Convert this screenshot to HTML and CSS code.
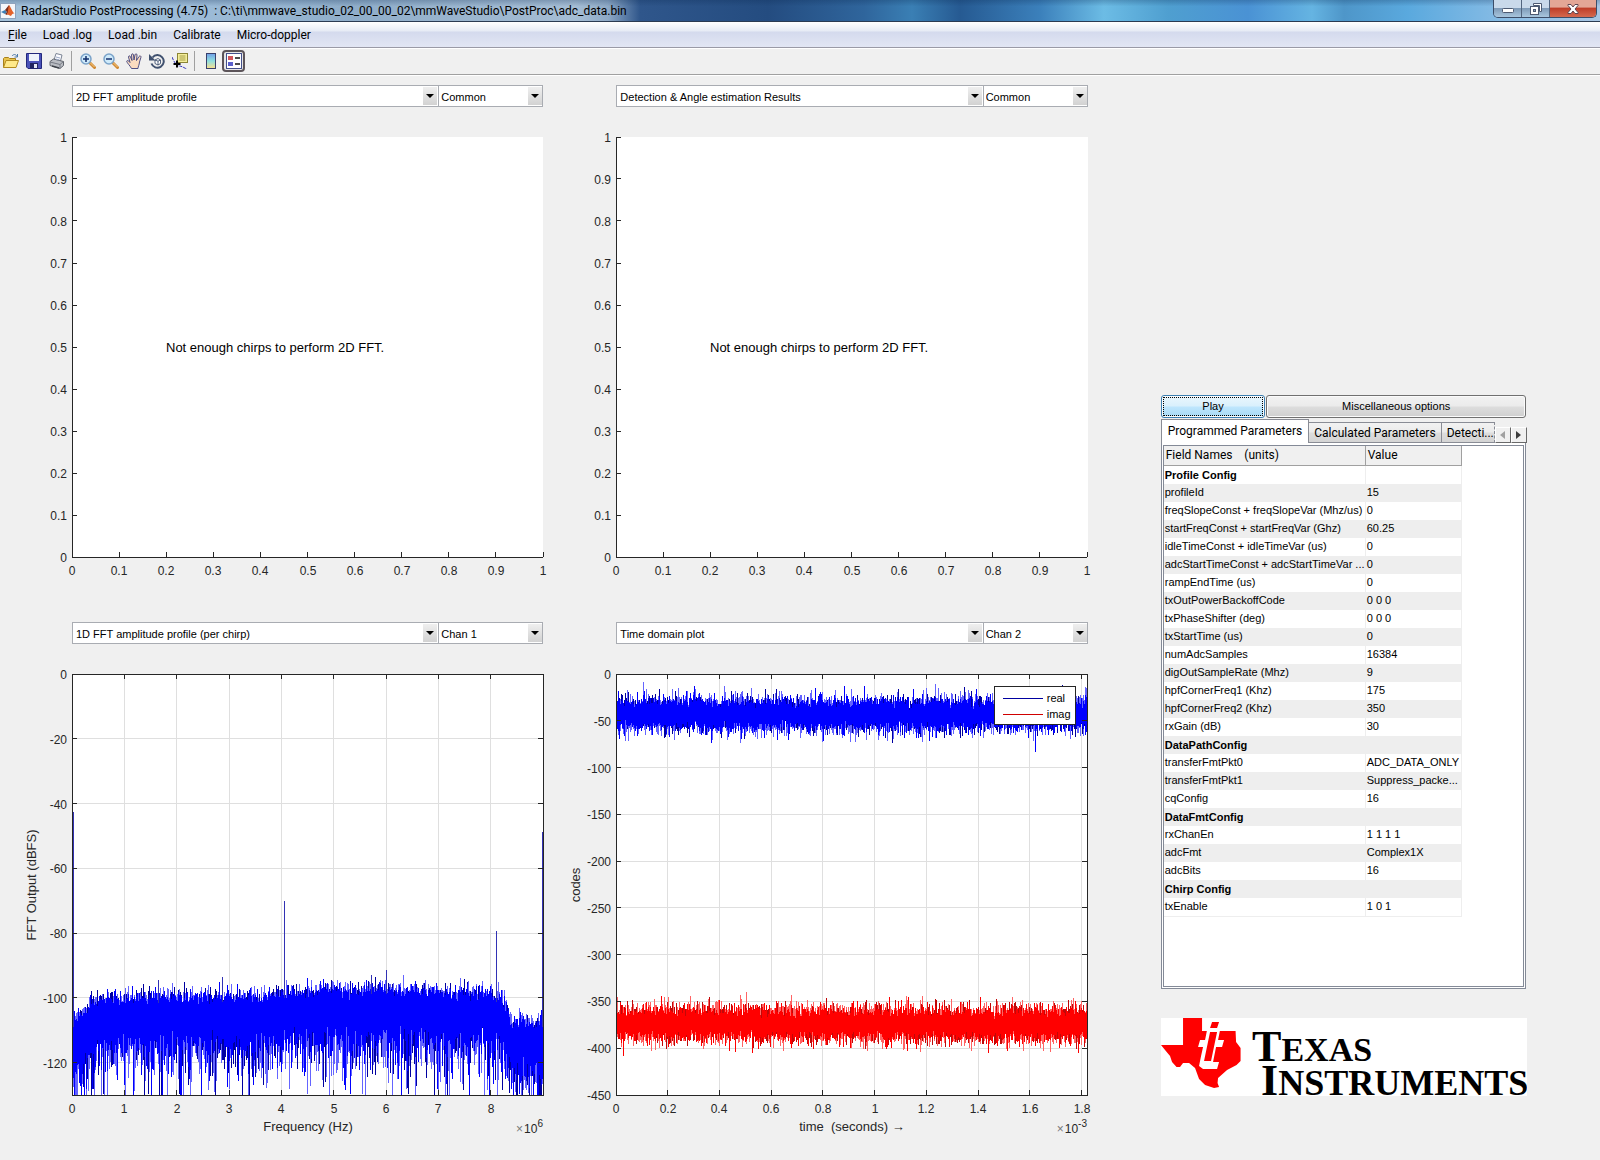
FILE: index.html
```html
<!DOCTYPE html>
<html lang="en">
<head>
<meta charset="utf-8">
<title>RadarStudio PostProcessing</title>
<link rel="stylesheet" href="styles.css">
</head>
<body>
<header class="titlebar">
  <svg class="app-icon" viewBox="0 0 16 16" aria-hidden="true">
    <rect x="0.5" y="0.5" width="15" height="15" fill="#f4f6fa" stroke="#8fa3bd"/>
    <path d="M1 9l4-2 2 2-2 2z" fill="#3f7fb5"/>
    <path d="M5 7l4-5 1 3-3 7-2-1 2-2z" fill="#7a2c1c"/>
    <path d="M9 2c2 2 3 7 6 9-2-1-3 0-4 2-1 0-2-2-4-1 1-3 1-6 2-10z" fill="#e4622a"/>
  </svg>
  <h1 class="window-title">RadarStudio PostProcessing (4.75)&nbsp; : C:\ti\mmwave_studio_02_00_00_02\mmWaveStudio\PostProc\adc_data.bin</h1>
  <div class="window-controls">
    <button class="win-btn" type="button" aria-label="Minimize"><svg width="14" height="12" viewBox="0 0 14 12"><rect x="1.500" y="5.500" width="11" height="4" rx="1" fill="#fff" stroke="#4d5a72"/></svg></button>
    <button class="win-btn" type="button" aria-label="Restore"><svg width="14" height="14" viewBox="0 0 14 14"><path d="M4.500 1.500h8v8h-2v-6h-6z" fill="#fff" stroke="#4d5a72"/><rect x="1.500" y="4.500" width="8" height="8" fill="#fff" stroke="#4d5a72"/><rect x="4.500" y="7.500" width="2" height="2" fill="#8fa6bf" stroke="#4d5a72"/></svg></button>
    <button class="win-btn win-close" type="button" aria-label="Close"><svg width="14" height="12" viewBox="0 0 14 12"><path d="M2 1.500h3l2 2.500 2-2.500h3v1L9 6l3 3.500v1H9L7 8l-2 2.500H2v-1L5 6 2 2.500z" fill="#fff" stroke="#5d4550"/></svg></button>
  </div>
</header>

<nav class="menubar" aria-label="Main menu">
  <button type="button"><u>F</u>ile</button>
  <button type="button">Load .log</button>
  <button type="button">Load .bin</button>
  <button type="button">Calibrate</button>
  <button type="button">Micro-doppler</button>
</nav>

<div class="toolbar" role="toolbar" aria-label="Figure tools">
  <button type="button" aria-label="Open"><svg viewBox="0 0 16 16"><path d="M.5 14.500v-9l1-1h4l1 1h6v3" fill="#e8c34c" stroke="#a8801a"/><path d="M.5 14.500L3 7.500h12.500L13 14.500z" fill="#ffe98a" stroke="#b38a1e"/><path d="M9 3c1.500-2 4-2 5 .5M14.500 1v3h-3" fill="none" stroke="#4b78a8"/></svg></button>
  <button type="button" aria-label="Save"><svg viewBox="0 0 16 16"><path d="M.5.5h15v15H2L.5 14z" fill="#4a52b8" stroke="#23287c"/><rect x="3" y="1" width="10" height="7" fill="#eef3fb"/><rect x="4" y="10" width="8" height="5.500" fill="#20245e"/><rect x="8" y="11" width="3" height="4" fill="#e4e8f4"/></svg></button>
  <button type="button" aria-label="Print"><svg viewBox="0 0 16 16"><path d="M5 7l2-6.500 6 1.500-1.500 6z" fill="#fbfbff" stroke="#7b8494"/><path d="M1 8.500L4.500 6 14.500 8.500v4L11 15.500 1 12.500z" fill="#b9bcc2" stroke="#62666e"/><path d="M1 9l10 2.500 3.500-3M11 11.500v4" fill="none" stroke="#777b84"/><path d="M3 13l7 2" stroke="#3f434a" stroke-width="1.500"/><path d="M7 4l4 1M6.500 6l4 1" stroke="#9aa8c4"/></svg></button>
  <span class="separator"></span>
  <button type="button" aria-label="Zoom in"><svg viewBox="0 0 16 16"><path d="M9.500 9.500l5 5" stroke="#d08a35" stroke-width="3" stroke-linecap="round"/><path d="M10 9.500l4.500 4.500" stroke="#f5cc86"/><circle cx="6" cy="6" r="5" fill="#cfeafa" stroke="#7ba3c9" stroke-width="1.500"/><path d="M6 3v6M3 6h6" stroke="#14306e" stroke-width="1.500"/></svg></button>
  <button type="button" aria-label="Zoom out"><svg viewBox="0 0 16 16"><path d="M9.500 9.500l5 5" stroke="#d08a35" stroke-width="3" stroke-linecap="round"/><path d="M10 9.500l4.500 4.500" stroke="#f5cc86"/><circle cx="6" cy="6" r="5" fill="#cfeafa" stroke="#7ba3c9" stroke-width="1.500"/><path d="M3 6h6" stroke="#14306e" stroke-width="1.500"/></svg></button>
  <button type="button" aria-label="Pan"><svg viewBox="0 0 16 16"><path d="M5.500 15.500C4 12.500 1 10 .7 8.300 1 7 2.500 7.500 4 9.500L2.500 4c0-1.500 1.600-1.600 2 0L6 7.500 5.500 2c.2-1.600 1.800-1.600 2 0L8 7 9 1.800c.4-1.500 2-1.200 2 .2L10.500 7.500 13 3.500c.9-1.300 2.400-.4 1.900 1L13.500 9c-.2 3-1.500 4.500-1.500 6.500z" fill="#fbdcc0" stroke="#3d3f7a" stroke-width=".9"/></svg></button>
  <button type="button" aria-label="Rotate 3D"><svg viewBox="0 0 16 16"><path d="M3.500 4.500a6.300 6.300 0 1 1-1 6" fill="none" stroke="#40516f" stroke-width="2"/><path d="M0 1v6.500h6.500z" fill="#40516f"/><path d="M6 7l3-1.500L11.500 7v3.500L9 12l-3-1.500zM6 7l3 1.200L11.500 7M9 8.200V12" fill="#fff" stroke="#40516f" stroke-width=".9"/></svg></button>
  <button type="button" aria-label="Data cursor"><svg viewBox="0 0 16 16"><path d="M0 4c2 5 4 8 7 9 3 0 5 2 8 3" fill="none" stroke="#3434b8" stroke-dasharray="3 1"/><rect x="5.500" y=".5" width="10" height="9" fill="#f4ee9a" stroke="#8b8536"/><path d="M7.500 3h6M7.500 5h6M7.500 7h6" stroke="#a59e4c"/><path d="M5 7.500v7M1.500 11h7" stroke="#000" stroke-width="2"/></svg></button>
  <span class="separator"></span>
  <button type="button" aria-label="Insert colorbar"><svg viewBox="0 0 16 16"><defs><linearGradient id="cb" x2="0" y2="1"><stop offset="0" stop-color="#6f9ee6"/><stop offset=".5" stop-color="#8fdfe0"/><stop offset="1" stop-color="#fbe08c"/></linearGradient></defs><rect x="3.500" y=".5" width="9" height="15" fill="url(#cb)" stroke="#39406c"/></svg></button>
  <button class="pressed" type="button" aria-label="Insert legend" aria-pressed="true"><svg viewBox="0 0 16 16"><rect x=".5" y=".5" width="15" height="15" fill="#fff" stroke="#44508c"/><rect x="2" y="3" width="5" height="4" fill="#d2555c"/><rect x="2" y="9" width="5" height="4" fill="#5b60cc"/><path d="M9 5h5M9 11h5" stroke="#111" stroke-width="1.500"/></svg></button>
</div>

<main class="workspace">
  <section class="figure" aria-label="Upper left plot">
    <div class="selectors">
      <span class="combo combo-wide"><select aria-label="Upper left plot type"><option>2D FFT amplitude profile</option></select></span>
      <span class="combo"><select aria-label="Upper left channel"><option>Common</option></select></span>
    </div>
    <div class="plot plot-open" data-plot="empty"></div>
  </section>
  <section class="figure" aria-label="Upper right plot">
    <div class="selectors">
      <span class="combo combo-wide"><select aria-label="Upper right plot type"><option>Detection &amp; Angle estimation Results</option></select></span>
      <span class="combo"><select aria-label="Upper right channel"><option>Common</option></select></span>
    </div>
    <div class="plot plot-open" data-plot="empty"></div>
  </section>

  <aside class="side">
    <div class="actions">
      <button class="action play" type="button">Play</button>
      <button class="action misc" type="button">Miscellaneous options</button>
    </div>
    <div class="tabs" role="tablist">
      <button class="tab active" type="button" role="tab" aria-selected="true">Programmed Parameters</button>
      <button class="tab" type="button" role="tab" aria-selected="false">Calculated Parameters</button>
      <button class="tab tab-cut" type="button" role="tab" aria-selected="false">Detecti...</button>
      <span class="tab-scroll">
        <button type="button" aria-label="Previous tabs" disabled><svg width="5" height="8" viewBox="0 0 5 8"><path d="M5 0v8L0 4z" fill="#a0a0a0"/></svg></button>
        <button type="button" aria-label="Next tabs"><svg width="5" height="8" viewBox="0 0 5 8"><path d="M0 0v8l5-4z" fill="#3c3c3c"/></svg></button>
      </span>
    </div>
    <div class="tab-panel" role="tabpanel">
      <div class="table-frame">
        <table class="params">
          <thead><tr><th scope="col">Field Names &nbsp;&nbsp; (units)</th><th scope="col">Value</th></tr></thead>
          <tbody>
            <tr class="group"><td>Profile Config</td><td></td></tr>
            <tr><td>profileId</td><td>15</td></tr>
            <tr><td>freqSlopeConst + freqSlopeVar (Mhz/us)</td><td>0</td></tr>
            <tr><td>startFreqConst + startFreqVar (Ghz)</td><td>60.25</td></tr>
            <tr><td>idleTimeConst + idleTimeVar (us)</td><td>0</td></tr>
            <tr><td>adcStartTimeConst + adcStartTimeVar ...</td><td>0</td></tr>
            <tr><td>rampEndTime (us)</td><td>0</td></tr>
            <tr><td>txOutPowerBackoffCode</td><td>0 0 0</td></tr>
            <tr><td>txPhaseShifter (deg)</td><td>0 0 0</td></tr>
            <tr><td>txStartTime (us)</td><td>0</td></tr>
            <tr><td>numAdcSamples</td><td>16384</td></tr>
            <tr><td>digOutSampleRate (Mhz)</td><td>9</td></tr>
            <tr><td>hpfCornerFreq1 (Khz)</td><td>175</td></tr>
            <tr><td>hpfCornerFreq2 (Khz)</td><td>350</td></tr>
            <tr><td>rxGain (dB)</td><td>30</td></tr>
            <tr class="group"><td>DataPathConfig</td><td></td></tr>
            <tr><td>transferFmtPkt0</td><td>ADC_DATA_ONLY</td></tr>
            <tr><td>transferFmtPkt1</td><td>Suppress_packe...</td></tr>
            <tr><td>cqConfig</td><td>16</td></tr>
            <tr class="group"><td>DataFmtConfig</td><td></td></tr>
            <tr><td>rxChanEn</td><td>1 1 1 1</td></tr>
            <tr><td>adcFmt</td><td>Complex1X</td></tr>
            <tr><td>adcBits</td><td>16</td></tr>
            <tr class="group"><td>Chirp Config</td><td></td></tr>
            <tr><td>txEnable</td><td>1 0 1</td></tr>
          </tbody>
        </table>
      </div>
    </div>
    <svg class="logo" viewBox="0 0 366 78" role="img" aria-label="Texas Instruments">
      <path fill="#f00" d="M22 0H41V13H74.500L75 24 79.500 30V43L75.500 47 66 52 57 60 56.500 65 58 69 53 70 44 67 38 61 34 50 28 45H22L19 49H15.500L11 44 9 38 4 32 0 27H22z"/>
      <path fill="#fff" d="M47 0h14l-2 12-2 10h6l-2 7h-6l-3 15h6l-2 7H42l-4-3 2-10 2-9h-5l2-7h5l2-10h-5V13h5z"/>
      <path fill="#f00" d="M51 4h7l-2 6h-7zM49 14h7l-6 29h-7z"/>
      <text class="logo-text" x="91" y="43"><tspan class="cap">T</tspan><tspan class="small">EXAS</tspan></text>
      <text class="logo-text" x="100" y="77"><tspan class="cap">I</tspan><tspan class="small wide">NSTRUMENTS</tspan></text>
    </svg>
  </aside>

  <section class="figure" aria-label="Lower left plot">
    <div class="selectors">
      <span class="combo combo-wide"><select aria-label="Lower left plot type"><option>1D FFT amplitude profile (per chirp)</option></select></span>
      <span class="combo"><select aria-label="Lower left channel"><option>Chan 1</option></select></span>
    </div>
    <div class="plot" data-plot="fft"></div>
  </section>
  <section class="figure" aria-label="Lower right plot">
    <div class="selectors">
      <span class="combo combo-wide"><select aria-label="Lower right plot type"><option>Time domain plot</option></select></span>
      <span class="combo"><select aria-label="Lower right channel"><option>Chan 2</option></select></span>
    </div>
    <div class="plot" data-plot="time">
      <ul class="legend">
        <li class="real">real</li>
        <li class="imag">imag</li>
      </ul>
    </div>
  </section>
</main>
<script src="plots.js"></script>
</body>
</html>
```

FILE: styles.css
```css
* { box-sizing: border-box; }

body {
  margin: 0;
  min-height: 100vh;
  background: #f0f0f0;
  color: #000;
  font-family: "Liberation Sans", Arial, sans-serif;
  font-size: 11px;
}

button { font: inherit; color: inherit; }

/* Window title bar */
.titlebar {
  display: flex;
  align-items: flex-start;
  height: 22px;
  border-bottom: 1px solid #2b3b52;
  background:
    linear-gradient(180deg, rgba(10, 40, 80, 0.25), rgba(255, 255, 255, 0) 30%),
    linear-gradient(90deg, #a3c1da 0%, #9dbcd8 12%, #8fadc9 22%, #a5bdd4 36%, #8ea9c6 38%, #2f568b 40%, #244c80 48%, #2f659c 54%, #3a7fb4 57%, #265a92 60%, #3b80bb 65%, #6cbce5 69%, #4f9fd0 73%, #4a92d4 78%, #65b4e2 82%, #4e96c9 84%, #5aa9de 88%, #8fbfe6 95%, #a8c6e4 100%);
}

.app-icon { width: 16px; height: 16px; margin: 3px 0 0; }

.window-title {
  flex: 1;
  margin: 0 0 0 5px;
  font: 400 12px/22px Roboto, "Open Sans", sans-serif;
  white-space: nowrap;
}

.window-controls {
  display: flex;
  height: 18px;
  margin-right: 3px;
  border: 1px solid #3c4d68;
  border-top: 0;
  border-radius: 0 0 5px 5px;
  overflow: hidden;
}

.win-btn {
  display: flex;
  align-items: center;
  justify-content: center;
  width: 28px;
  padding: 0;
  border: 0;
  border-right: 1px solid #52657f;
  background: linear-gradient(#c9d9ea 0 45%, #7f9bb8 50%, #a9c6de);
}

.win-close { width: 46px; border-right: 0; background: linear-gradient(#e3a696 0 40%, #bf3f2a 50%, #d5694f); }

/* Menu bar */
.menubar {
  display: flex;
  height: 26px;
  border-bottom: 1px solid #9a9aa6;
  background: linear-gradient(#fff, #e6ebf5 9px, #d4daed 10px, #e2e6f4);
}

.menubar button {
  padding: 0 8px;
  border: 0;
  background: none;
  font: 12px/26px Roboto, "Open Sans", sans-serif;
}

/* Toolbar */
.toolbar {
  display: flex;
  align-items: center;
  height: 27px;
  padding-bottom: 2px;
  border-top: 1px solid #fff;
  border-bottom: 1px solid #a0a0a0;
  box-shadow: 0 1px #fff;
}

.toolbar button {
  display: flex;
  align-items: center;
  justify-content: center;
  width: 23px;
  height: 22px;
  padding: 0;
  border: 0;
  background: none;
}

.toolbar button:first-child { width: 22px; }

.toolbar svg { width: 16px; height: 16px; flex: none; }

.toolbar .pressed { border: 2px solid #5c5459; border-radius: 4px; background: #e6e6e6; }

.separator { width: 8px; height: 20px; border-right: 4px solid transparent; background: linear-gradient(90deg, transparent 3px, #a0a0a0 3px); background-clip: padding-box; }

/* Plots and side panel */
.workspace {
  display: grid;
  grid-template-columns: 471fr 471fr 366fr;
  gap: 65px 73px;
  padding: 10px 73px 65px 72px;
}

.figure { display: flex; flex-direction: column; gap: 30px; min-width: 0; }

.selectors { display: flex; }

.combo { position: relative; flex: 105 1 0; height: 22px; }
.combo-wide { flex-grow: 366; }

.combo select {
  width: 100%;
  height: 100%;
  padding: 2px 18px 0 3px;
  border: 1px solid #a9acb2;
  border-radius: 0;
  background: #fff;
  color: #000;
  font: inherit;
  appearance: none;
}

.combo-wide select { border-right-width: 0; }
.combo:not(.combo-wide) select { padding-left: 2px; }

.combo::after {
  content: "";
  position: absolute;
  inset: 2px 1px 2px auto;
  width: 14px;
  background: linear-gradient(#efefef, #d2d2d2);
  pointer-events: none;
}

.combo::before {
  content: "";
  position: absolute;
  z-index: 1;
  top: 9px;
  right: 4px;
  border: 4px solid transparent;
  border-top-color: #000;
  border-bottom: 0;
  pointer-events: none;
}

.plot { position: relative; aspect-ratio: 471 / 421; background: #fff; }
.plot-open { aspect-ratio: 471 / 420; }
.plot > svg { position: absolute; inset: 0; width: 100%; height: 100%; overflow: visible; }

.plot text { fill: #262626; font-size: 12px; }
.plot .axis-title { font-size: 13px; }
.plot .message { fill: #000; font-size: 13px; }
.plot .exponent { font-size: 10px; }
.plot .times { fill: #777; }
.axis { stroke: #262626; fill: none; shape-rendering: crispEdges; }
.grid { stroke: #262626; stroke-opacity: 0.15; fill: none; shape-rendering: crispEdges; }
.trace { fill: none; shape-rendering: crispEdges; }
.blue { stroke: #00f; }
.blue-dark { stroke: #0000a0; }
.blue-light { stroke: #6464ff; }
.blue-peak { stroke: #3232b4; }
.red { stroke: #f00; }
.red-dark { stroke: #c00808; }
.red-light { stroke: #ff6464; }

.legend {
  position: absolute;
  z-index: 1;
  top: 12px;
  right: 12px;
  width: 82px;
  margin: 0;
  padding: 3px 0 2px 8px;
  border: 1px solid #262626;
  background: #fff;
  list-style: none;
}

.legend li { display: flex; align-items: center; gap: 4px; line-height: 16px; }
.legend li::before { content: ""; width: 40px; height: 1px; background: #0000a0; }
.legend .imag::before { background: #d00000; }

/* Side panel */
.side { grid-column: 3; grid-row: 1 / span 2; align-self: end; min-width: 0; }

.actions { display: flex; gap: 1px; margin-right: 1px; }

.action {
  flex: 261 1 0;
  height: 23px;
  padding: 0;
  border: 1px solid #707070;
  border-radius: 3px;
  background: linear-gradient(#f2f2f2, #ebebeb 48%, #dddddd 52%, #cfcfcf);
  box-shadow: inset 0 0 0 1px #fbfbfb;
}

.action.play {
  flex-grow: 104;
  border-color: #3c7fb1;
  background: linear-gradient(#eaf6fd, #d9f0fc 48%, #bee6fd 52%, #a7d9f5);
  outline: 1px dotted #000;
  outline-offset: -3px;
}

.tabs {
  display: flex;
  align-items: flex-end;
  margin-top: 1px;
  font: 12px/20px Roboto, "Open Sans", sans-serif;
}

.tab {
  height: 21px;
  padding: 0 5px;
  border: 1px solid #898c95;
  border-left-width: 0;
  background: linear-gradient(#f2f2f2, #ebebeb 48%, #dddddd 52%, #d4d4d4);
  white-space: nowrap;
}

.tab.active {
  height: 24px;
  padding: 0 6px;
  border-left-width: 1px;
  border-bottom: 0;
  background: #fff;
}

.tab-cut { flex: 1; border-right: 1px dashed #898c95; text-align: left; overflow: hidden; padding-right: 0; }

.tab-scroll { display: flex; }

.tab-scroll button {
  display: flex;
  align-items: center;
  justify-content: center;
  width: 16px;
  height: 16px;
  padding: 0;
  border: 1px solid #696969;
  border-top-color: #fff;
  border-left-color: #fff;
  background: #f0f0f0;
}

.tab-panel {
  height: 546px;
  padding: 2px 1px 1px;
  border: 1px solid #848a97;
  border-top: 0;
  background: #fff;
  margin-right: 1px;
}

.table-frame { height: 100%; border: 1px solid #848a97; }

.params { width: 298px; border-collapse: separate; border-spacing: 0; table-layout: fixed; }

.params th {
  height: 20px;
  padding: 0 2px;
  border-right: 1px solid #a0a0a0;
  border-bottom: 1px solid #a0a0a0;
  background: #f0f0f0;
  font: 400 12px/18px Roboto, "Open Sans", sans-serif;
  text-align: left;
  white-space: nowrap;
}

.params th:first-child { width: 202px; }

.params td {
  height: 18px;
  padding: 0 0 2px 1px;
  border-right: 1px solid #eee;
  line-height: 16px;
  white-space: nowrap;
}

.params tbody tr:nth-child(even) { background: #eee; }
.params tbody tr:last-child td { border-bottom: 1px solid #eee; }
.params .group td { padding-bottom: 0; line-height: 18px; font-weight: 700; }

.logo { display: block; width: 100%; margin-top: 29px; background: #fff; }
.logo-text { fill: #000; font-family: "Liberation Serif", "Times New Roman", serif; font-weight: 700; }
.logo-text .cap { font-size: 44px; }
.logo-text .small { font-size: 34px; }
.logo-text .wide { font-size: 36px; }
```

FILE: plots.js
```js
// Draws the four axes and their traces as SVG, redrawn when a plot is resized.
const NS = 'http://www.w3.org/2000/svg';
const SAMPLES = 16384;

function random(seed) {
  return () => {
    seed = (seed + 0x6d2b79f5) | 0;
    let t = Math.imul(seed ^ (seed >>> 15), 1 | seed);
    t = (t + Math.imul(t ^ (t >>> 7), 61 | t)) ^ t;
    return ((t ^ (t >>> 14)) >>> 0) / 4294967296;
  };
}

function add(parent, name, attrs, text) {
  const el = document.createElementNS(NS, name);
  for (const key in attrs) el.setAttribute(key, attrs[key]);
  if (text !== undefined) el.textContent = text;
  parent.appendChild(el);
  return el;
}

function interpolate(points, x) {
  for (let i = 1; i < points.length; i++) {
    if (x <= points[i][0]) {
      const [x0, y0] = points[i - 1];
      const [x1, y1] = points[i];
      return y0 + (y1 - y0) * (x - x0) / (x1 - x0);
    }
  }
  return points[points.length - 1][1];
}

// Mean noise level in dBFS against frequency in MHz.
const noiseFloor = [[0, -112], [0.2, -108.5], [0.5, -105.5], [1, -104.6], [3.5, -104], [4.5, -102.5],
  [6, -101.8], [7, -102.5], [8, -103.5], [8.25, -105.5], [8.4, -112], [9, -112]];

function fftSample(rand, x) {
  return interpolate(noiseFloor, x) + 10 * Math.log10(-Math.log(1 - rand()) + 1e-9);
}

function gaussian(mean, sigma) {
  return rand => mean + sigma * Math.sqrt(-2 * Math.log(1 - rand())) * Math.cos(2 * Math.PI * rand());
}

const empty = {
  x: [0, 1], y: [0, 1],
  xTicks: [0, 0.1, 0.2, 0.3, 0.4, 0.5, 0.6, 0.7, 0.8, 0.9, 1],
  yTicks: [0, 0.1, 0.2, 0.3, 0.4, 0.5, 0.6, 0.7, 0.8, 0.9, 1],
  message: 'Not enough chirps to perform 2D FFT.', series: []
};

const plots = {
  empty,
  fft: {
    x: [0, 9], y: [-130, 0], box: true,
    xTicks: [0, 1, 2, 3, 4, 5, 6, 7, 8],
    yTicks: [0, -20, -40, -60, -80, -100, -120],
    xTitle: 'Frequency (Hz)', yTitle: 'FFT Output (dBFS)', power: '6',
    series: [{
      color: 'blue', seed: 11, sample: fftSample,
      peaks: [[0, -42.6], [4.06, -70], [8.11, -79.3], [9, -48.8], [6, -91.5], [5.72, -93], [2.87, -93.7], [1.66, -94.5]]
    }]
  },
  time: {
    x: [0, 1.8204], y: [-450, 0], box: true,
    xTicks: [0, 0.2, 0.4, 0.6, 0.8, 1, 1.2, 1.4, 1.6, 1.8],
    yTicks: [0, -50, -100, -150, -200, -250, -300, -350, -400, -450],
    xTitle: 'time\u00a0 (seconds) \u2192', yTitle: 'codes', power: '-3',
    series: [
      { color: 'blue', seed: 5, sample: gaussian(-43, 9), peaks: [] },
      { color: 'red', seed: 23, sample: gaussian(-374, 9), peaks: [] }
    ]
  }
};

function drawSeries(svg, plot, series, w, sx, sy) {
  const rand = random(series.seed);
  const paths = { '': '', '-dark': '', '-light': '', '-peak': '' };
  const perColumn = Math.round(SAMPLES / w);
  const floor = sy(plot.y[0]);
  const segment = (kind, col, from, to) => {
    const end = Math.min(Math.round(to), floor);
    if (end > from) paths[kind] += `M${col + 0.5} ${Math.round(from)}V${end}`;
  };
  const tipKind = () => ['', '-dark', '-light', '-light'][Math.floor(rand() * 4)];
  for (let col = 0; col < w; col++) {
    const x = plot.x[0] + (plot.x[1] - plot.x[0]) * col / w;
    const values = [];
    for (let i = 0; i < perColumn; i++) values.push(sy(series.sample(rand, x)));
    values.sort((a, b) => a - b);
    const top = values[2];
    const bottom = values[values.length - 3];
    segment('', col, top, bottom);
    segment(tipKind(), col, values[0], top);
    segment(tipKind(), col, bottom, values[values.length - 1]);
  }
  for (const [x, y] of series.peaks) {
    const col = Math.max(1, Math.min(Math.floor(sx(x)), w - 1));
    segment('-peak', col, sy(y), sy(interpolate(noiseFloor, x) + 3));
  }
  for (const kind in paths) add(svg, 'path', { class: `trace ${series.color}${kind}`, d: paths[kind] });
}

function draw(host) {
  const plot = plots[host.dataset.plot];
  const w = Math.round(host.clientWidth);
  const h = Math.round(host.clientHeight);
  const sx = x => (x - plot.x[0]) / (plot.x[1] - plot.x[0]) * w;
  const sy = y => (plot.y[1] - y) / (plot.y[1] - plot.y[0]) * h;
  const old = host.querySelector('svg');
  if (old) old.remove();
  const svg = add(host, 'svg', {});

  let grid = '';
  let ticks = '';
  for (const t of plot.xTicks) {
    const px = Math.floor(sx(t)) + 0.5;
    ticks += `M${px} ${h}v-5`;
    if (plot.box) {
      grid += `M${px} 0V${h}`;
      ticks += `M${px} 0v5`;
    }
    add(svg, 'text', { x: Math.round(sx(t)), y: h + 18, 'text-anchor': 'middle' }, t);
  }
  for (const t of plot.yTicks) {
    const py = Math.floor(sy(t)) + 0.5;
    ticks += `M0 ${py}h5`;
    if (plot.box) {
      grid += `M0 ${py}H${w}`;
      ticks += `M${w} ${py}h-5`;
    }
    add(svg, 'text', { x: -5, y: Math.round(sy(t)) + 5, 'text-anchor': 'end' }, t);
  }
  if (plot.box) add(svg, 'path', { class: 'grid', d: grid });
  for (const series of plot.series) drawSeries(svg, plot, series, w, sx, sy);
  const frame = plot.box ? `M0.5 0.5H${w + 0.5}V${h + 0.5}H0.5z` : `M0.5 0V${h + 0.5}H${w}`;
  add(svg, 'path', { class: 'axis', d: frame + ticks });

  if (plot.message) add(svg, 'text', { class: 'message', x: Math.round(w * 0.2), y: Math.round(h / 2) + 5 }, plot.message);
  if (plot.xTitle) add(svg, 'text', { class: 'axis-title', x: Math.round(w / 2), y: h + 36, 'text-anchor': 'middle' }, plot.xTitle);
  if (plot.yTitle) {
    add(svg, 'text', {
      class: 'axis-title', 'text-anchor': 'middle',
      transform: `translate(-36 ${Math.round(h / 2)}) rotate(-90)`
    }, plot.yTitle);
  }
  if (plot.power) {
    const scale = add(svg, 'text', { x: w, y: h + 38, 'text-anchor': 'end' });
    add(scale, 'tspan', { class: 'times' }, '\u00d7');
    add(scale, 'tspan', { dx: 1 }, '10');
    add(scale, 'tspan', { class: 'exponent', dy: -6 }, plot.power);
  }
}

const observer = new ResizeObserver(entries => entries.forEach(e => draw(e.target)));
document.querySelectorAll('.plot').forEach(host => {
  draw(host);
  observer.observe(host);
});
```
